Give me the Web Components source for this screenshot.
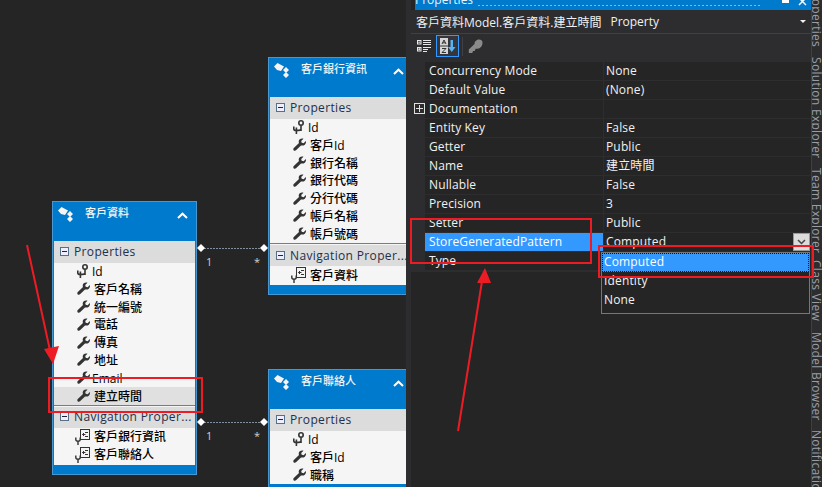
<!DOCTYPE html>
<html><head><meta charset="utf-8">
<style>
html,body{margin:0;padding:0;background:#252526;overflow:hidden}
body{width:822px;height:487px;font:12px "Open Sans","Noto Sans CJK TC",sans-serif;color:#f1f1f1}
</style></head><body>
<vs-window>
  <er-canvas slot="canvas">
    <er-entity name="客戶資料" style="left:52px;top:201px">
      <er-section title="Properties">
        <er-row icon="key" latin>Id</er-row><er-row>客戶名稱</er-row><er-row>統一編號</er-row><er-row>電話</er-row><er-row>傳真</er-row><er-row>地址</er-row><er-row latin>Email</er-row><er-row selected>建立時間</er-row>
      </er-section>
      <er-section title="Navigation Proper..." divided>
        <er-row icon="nav">客戶銀行資訊</er-row><er-row icon="nav">客戶聯絡人</er-row>
      </er-section>
    </er-entity>
    <er-entity name="客戶銀行資訊" style="left:268px;top:57px">
      <er-section title="Properties">
        <er-row icon="key" latin>Id</er-row><er-row>客戶Id</er-row><er-row>銀行名稱</er-row><er-row>銀行代碼</er-row><er-row>分行代碼</er-row><er-row>帳戶名稱</er-row><er-row>帳戶號碼</er-row>
      </er-section>
      <er-section title="Navigation Proper..." divided>
        <er-row icon="nav">客戶資料</er-row>
      </er-section>
    </er-entity>
    <er-entity name="客戶聯絡人" style="left:268px;top:369px">
      <er-section title="Properties">
        <er-row icon="key" latin>Id</er-row><er-row>客戶Id</er-row><er-row>職稱</er-row>
      </er-section>
    </er-entity>
    <er-link style="left:197px;top:242px"></er-link>
    <er-link style="left:197px;top:416px"></er-link>
  </er-canvas>
  <prop-panel slot="panel">
    <prop-row name="Concurrency Mode" value="None"></prop-row>
    <prop-row name="Default Value" value="(None)"></prop-row>
    <prop-row name="Documentation" expand></prop-row>
    <prop-row name="Entity Key" value="False"></prop-row>
    <prop-row name="Getter" value="Public"></prop-row>
    <prop-row name="Name" value="建立時間"></prop-row>
    <prop-row name="Nullable" value="False"></prop-row>
    <prop-row name="Precision" value="3"></prop-row>
    <prop-row name="Setter" value="Public"></prop-row>
    <prop-row name="StoreGeneratedPattern" value="Computed" selected></prop-row>
    <prop-row name="Type"></prop-row>
    <combo-list slot="overlay"></combo-list>
  </prop-panel>
  <side-rail slot="rail"></side-rail>
</vs-window>
<red-notes></red-notes>
<script>
const ICONS={
wrench:'<svg width="13" height="14" viewBox="0 0 13 14"><path fill="#333" d="M12.900 3 10.600 5.300 8.700 4.800 8.200 3 10.500.7C8.400-.2 5.800 1 5.700 3.500c0 .6.100 1.100.3 1.600L.8 10c-1.500 1.500.6 3.800 2.200 2.300L8 7.400C10.800 8.300 13.600 6 12.900 3Z"/></svg>',
key:'<svg width="11" height="14" viewBox="0 0 11 14"><g fill="none" stroke="#333" stroke-width="1.600"><circle cx="8" cy="3" r="2.200"/><path d="M8 5.500v5.500M3.400 7.500V14M.8 6.500v2.600c0 1 1.200 1.500 2.600 1.500 1.800 0 3-.3 4.600-.6"/></g></svg>',
nav:'<svg width="15" height="16" viewBox="0 0 15 16"><g fill="none" stroke="#333"><rect x="5.500" y=".5" width="9" height="10" fill="#f5f5f5"/><path d="M10 3.500h3M10 7.500h3M10.500 5.500H7.500m1.500-1.500L7.500 5.500 9 7"/><path stroke-width="1.400" d="M.8 8.500v2c0 1 1 1.600 2.200 1.600s2.200-.6 2.200-1.600v-2M3 12v4"/></g></svg>'
};
function def(name,html){customElements.define(name,class extends HTMLElement{constructor(){super();this.attachShadow({mode:'open'});if(typeof html!=='function')this.shadowRoot.innerHTML=html}connectedCallback(){if(typeof html==='function')this.shadowRoot.innerHTML=html(this)}})}

def('vs-window',`<style>:host{display:flex;width:822px;height:487px;overflow:hidden}
.split{flex:0 0 5px;background:#2d2d30}</style>
<slot name="canvas"></slot><div class="split"></div><slot name="panel"></slot><slot name="rail"></slot>`);

def('er-canvas',`<style>:host{display:block;position:relative;flex:0 0 406px;height:487px;overflow:hidden;background:#252526}</style><slot></slot>`);

def('er-entity',h=>`<style>
:host{display:block;position:absolute;width:143px;border:1px solid #4797d3;background:#007acc;color:#000}
.head{height:39px;display:flex;align-items:flex-start;box-sizing:border-box;padding:5px 0 0 5px;color:#f4f4f4;font:500 11px/12px "Noto Sans CJK TC",sans-serif}
.ic{flex:0 0 15px;height:15px;margin-right:12px;display:block}
.t{flex:1;margin-top:-1px}
.ch{flex:none;margin:5px 8px 0 0;display:block}
.body{padding:0 1px 9px}
</style>
<div class="head"><svg class="ic" viewBox="0 0 15 15"><path fill="#f4f4f4" d="M0 3.500 3.500 0 10 3.500 7 8 3 7ZM12 4 15 7 12 10 9 7ZM12 9 15 12 12 15 9 12Z"/></svg><div class="t">${h.getAttribute('name')}</div><svg class="ch" width="11" height="7" viewBox="0 0 11 7"><path d="M1 6 5.500 1.700 10 6" fill="none" stroke="#fff" stroke-width="2"/></svg></div>
<div class="body"><slot></slot></div>`);

def('er-section',h=>`<style>:host{display:block;background:#f5f5f5;padding-bottom:${h.hasAttribute('divided')?1:0}px}
.d{height:1px;background:#2f8fd8;margin-bottom:1px}
.bar{height:${h.hasAttribute('divided')?21:21.6}px;background:#dcdcdc;display:flex;align-items:center;padding:0 0 ${h.hasAttribute('divided')?1:0}px 6px;box-sizing:${h.hasAttribute('divided')?'border-box':'content-box'};gap:5px;font:12px "Open Sans",sans-serif;color:#22304a;white-space:nowrap;overflow:hidden;letter-spacing:.35px}
.b{flex:0 0 7px;height:7px;border:1px solid #56708a;background:#eef;position:relative}
.b:after{content:"";position:absolute;left:1px;right:1px;top:3px;height:1px;background:#223}
</style>${h.hasAttribute('divided')?'<div class="d"></div>':''}<div class="bar"><span class="b"></span>${h.getAttribute('title')}</div><slot></slot>`);

def('er-row',h=>{const ic=h.getAttribute('icon')||'wrench',lat=h.hasAttribute('latin');return `<style>:host{display:flex;align-items:center;height:17.8px;padding-left:${ic==='nav'?21:23}px;background:${h.hasAttribute('selected')?'#e0e0e0':'transparent'};font:${lat?400:500} 12px/17px "Open Sans","Noto Sans CJK TC",sans-serif;color:#000;white-space:nowrap}
.i{flex:none;display:flex;margin-right:${ic==='key'?4:ic==='nav'?4:lat?2:4}px}svg{display:block}</style>
<span class="i">${ICONS[ic]}</span><slot></slot>`});

def('er-link',`<style>:host{display:block;position:absolute;width:71px;height:24px;color:#cfcfcf;font:11px/12px "Open Sans",sans-serif}
svg{display:block;position:absolute;left:0;top:0}
.a,.b{position:absolute;top:14px}.a{left:9px}.b{left:57px}</style>
<svg width="71" height="12" viewBox="0 0 71 12"><path d="M4 6.500H67" stroke="#7f8f9f" stroke-dasharray="2 1"/><path fill="#fff" d="M0 6 4 2 8 6 4 10ZM63 6 67 2 71 6 67 10Z"/></svg><span class="a">1</span><span class="b">*</span>`);

def('prop-panel',`<style>:host{display:block;position:relative;flex:0 0 400px;height:487px;background:#252526;overflow:hidden}
.title{height:10px;margin-left:4px;background:#007acc;position:relative;overflow:hidden;color:#e8f2fa;font:12px/12px "Open Sans",sans-serif}
.title span{position:absolute;left:0;top:-6px}
.title i{position:absolute;left:62px;right:50px;top:4px;height:3px;background-image:radial-gradient(#7fbce6 .6px,transparent .7px);background-size:4px 3px}
.title svg{position:absolute;right:0;top:0}
.obj{height:24px;background:#2d2d30;border-bottom:1px solid #3f3f46;box-sizing:border-box;display:flex;align-items:center;padding:0 4px 0 5px;font:12px "Open Sans","Noto Sans CJK TC",sans-serif;color:#f1f1f1;white-space:nowrap}
.obj b{font-weight:400;margin-right:9px}
.obj s{flex:1}
.obj u{border:3px solid transparent;border-top:3px solid #f1f1f1;border-bottom:0;width:0;margin-right:1px}
.bar{height:28px;padding:0 0 4px 6px;background:#2d2d30;display:flex;align-items:center;box-sizing:border-box}
.bar span{display:flex;align-items:center;justify-content:center}
.s1{width:14px;margin-right:5px}
.s2{width:21px;height:20px;border:1px solid #3399ff;background:#35353a;margin-right:3px}
.sep{width:1px;height:19px;background:#3f3f46;margin-right:5px}
.grid{background:#2d2d30;padding-left:14px;height:209px;border-bottom:1px solid #2d2d30}
</style>
<div class="title"><span>Properties</span><i></i><svg width="38" height="10" viewBox="0 0 38 10"><path fill="#fff" d="M9 0h7v3H9Z"/><path stroke="#fff" stroke-width="1.400" d="M26 -2l7 7M33 -2l-7 7"/></svg></div>
<div class="obj"><b>客戶資料Model.客戶資料.建立時間</b>Property<s></s><u></u></div>
<div class="bar">
<span class="s1"><svg width="14" height="14" viewBox="0 0 14 14"><g fill="none" stroke="#e8e8e8"><rect x=".5" y="1.500" width="3.500" height="3.500"/><rect x=".5" y="8.500" width="3.500" height="3.500"/><path d="M1.200 3.200h2.200M1.200 10.200h2.200M2.300 9.200v2"/><path d="M6 1.500h8M6 3.500h8M6 5.500h8M6 8.500h8M6 10.500h5M6 12.500h4"/></g></svg></span>
<span class="s2"><svg width="17" height="16" viewBox="0 0 17 16"><rect x="1" y="0" width="8" height="7.500" fill="#d5d5d5"/><rect x="1" y="8.500" width="8" height="7.500" fill="#d5d5d5"/><path fill="none" stroke="#333" d="M3 6 5 2 7 6M3.700 4.800H6.300M3 10.500h4L3 14.500h4"/><path fill="#55b4f5" d="M11.500 2h2.500v7h2.500L12.750 14 9 9h2.500Z"/></svg></span>
<span class="sep"></span>
<svg width="15" height="15" viewBox="0 0 15 15"><path fill="#8a8a8a" d="M14.500 3.500C14.500 1.500 13 .5 11 .5 9 .5 6.500 2 6.500 5L.8 10.500v3.500h3.500l.7-2h1.800l.7-2.200H9.500C12.500 9.500 14.500 7 14.500 3.500Z"/></svg></div>
<div class="grid"><slot></slot></div><slot name="overlay"></slot>`);

def('prop-row',h=>`<style>:host{display:flex;height:19px;box-sizing:border-box;border-bottom:1px solid #2d2d30;background:#252526;font:12px/18px "Open Sans","Noto Sans CJK TC",sans-serif;color:#f1f1f1;white-space:nowrap;position:relative}
.n{flex:0 0 178px;box-sizing:border-box;padding-left:4px;letter-spacing:.12px;height:18px;${h.hasAttribute('selected')?'background:#3399ff;color:#fff;':''}}
.v{flex:1;border-left:1px solid #2d2d30;padding-left:2px;letter-spacing:.15px}
.x{position:absolute;left:-11px;top:3px;width:9px;height:9px;border:1px solid #e0e0e0}
.x:before,.x:after{content:"";position:absolute;background:#e0e0e0}
.x:before{left:1px;right:1px;top:4px;height:1px}.x:after{top:1px;bottom:1px;left:4px;width:1px}
</style>${h.hasAttribute('expand')?'<i class="x"></i>':''}<div class="n">${h.getAttribute('name')}</div><div class="v">${h.getAttribute('value')||''}</div>`);

def('combo-list',`<style>:host{display:block;position:absolute;left:190px;top:233px;width:209px;font:12px/18px "Open Sans",sans-serif;color:#f1f1f1;letter-spacing:.15px}
.btn{height:18px;width:17px;margin:0 0 1px auto;background:#dcdcdc;border:1px solid #999;box-sizing:border-box;display:flex;align-items:center;justify-content:center}
.list{height:62px;box-sizing:border-box;border:1px solid #777;background:#252526;}
.o{height:18.5px;padding-left:2px;line-height:17px}
.o.s{height:19px;background:#3399ff;color:#fff;outline:1px dotted #111;outline-offset:-1px}
</style><div class="btn"><svg width="9" height="6" viewBox="0 0 9 6"><path d="M1 1 4.500 4.500 8 1" fill="none" stroke="#444" stroke-width="1.500"/></svg></div>
<div class="list"><div class="o s">Computed</div><div class="o">Identity</div><div class="o">None</div></div>`);

def('side-rail',`<style>:host{display:flex;flex-direction:column;flex:0 0 11px;height:487px;overflow:hidden;background:#2d2d30;border-left:1px solid #3f3f46;box-sizing:border-box;color:#9a9da3;font:12px/11px "Open Sans",sans-serif}
span{writing-mode:vertical-rl;white-space:nowrap;display:block;letter-spacing:.3px}
</style><span style="margin-top:-14px;height:59px">Properties</span><span style="margin-top:12px;height:95px">Solution Explorer</span><span style="margin-top:16px;height:76px">Team Explorer</span><span style="margin-top:16px;height:58px">Class View</span><span style="margin-top:14px;height:86px">Model Browser</span><span style="margin-top:12px">Notifications</span>`);

def('red-notes',`<style>:host{display:block;position:absolute;left:0;top:0;width:822px;height:487px;pointer-events:none}svg{display:block}</style>
<svg width="822" height="487" viewBox="0 0 822 487"><g fill="none" stroke="#ed1c24" stroke-width="2"><rect x="49" y="378" width="153" height="34"/><rect x="411" y="219" width="180" height="44"/><rect x="599" y="246" width="214" height="31"/>
<path d="M27 245 51 355M458 431 483 275"/></g>
<path fill="#ed1c24" d="M53 364 44 349 59 346ZM485 268 491 283 477 283Z"/></svg>`);
</script>
</body></html>
